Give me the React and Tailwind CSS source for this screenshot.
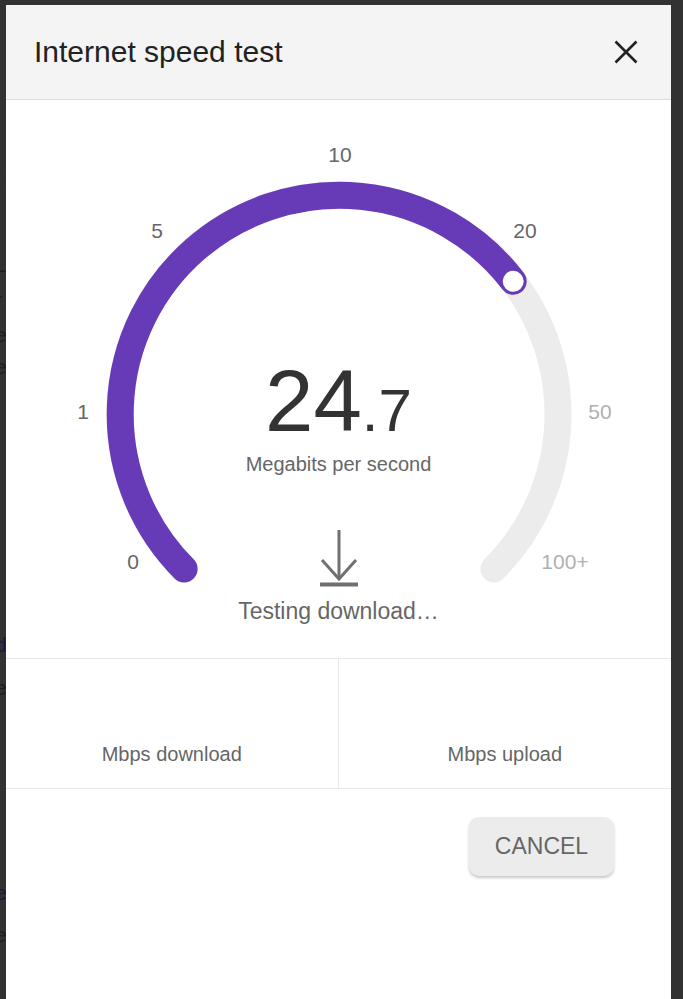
import React from "react";

const PURPLE = "#673ab7";

// fragments of the page behind the dialog, cut off at the left edge
const fragments = [
  { ch: "t", mt: "mt-[168px]", color: "text-[#2a2118]" },
  { ch: "L", mt: "mt-[67px]", color: "text-[#1c1c1c]" },
  { ch: "r", mt: "mt-[15px]", color: "text-[#161a40]" },
  { ch: "e", mt: "mt-[15px]", color: "text-[#1e1e1e]" },
  { ch: "e", mt: "mt-[12px]", color: "text-[#1e1e1e]" },
  { ch: "d", mt: "mt-[258px]", color: "text-[#16164a]" },
  { ch: "e", mt: "mt-[23px]", color: "text-[#1e1e1e]" },
  { ch: "e", mt: "mt-[185px]", color: "text-[#16164a]" },
  { ch: "e", mt: "mt-[22px]", color: "text-[#1e1e1e]" },
];

const labels = [
  { text: "0", pos: "left-[127px] top-[461px]", color: "text-[#666]" },
  { text: "1", pos: "left-[77px] top-[311px]", color: "text-[#666]" },
  { text: "5", pos: "left-[151px] top-[130px]", color: "text-[#666]" },
  { text: "10", pos: "left-[334px] top-[54px]", color: "text-[#666]" },
  { text: "20", pos: "left-[519px] top-[130px]", color: "text-[#666]" },
  { text: "50", pos: "left-[594px] top-[311px]", color: "text-[#b0b0b0]" },
  { text: "100+", pos: "left-[559px] top-[461px]", color: "text-[#b0b0b0]" },
];

const Gauge = () => (
  <svg className="absolute inset-0" width="665" height="558" viewBox="0 0 665 558">
    <path
      d="M 178.1 468.9 A 219 219 0 1 1 487.9 468.9"
      fill="none"
      stroke="#ececec"
      strokeWidth="27"
      strokeLinecap="round"
    />
    <path
      d="M 178.1 468.9 A 219 219 0 1 1 507.2 181.3"
      fill="none"
      stroke={PURPLE}
      strokeWidth="27"
      strokeLinecap="round"
    />
    <circle cx="507.2" cy="181.3" r="11.5" fill="#fff" stroke={PURPLE} strokeWidth="2" />
  </svg>
);

const DownloadIcon = () => (
  <svg width="40" height="58" viewBox="0 0 40 58" fill="none" stroke="#707070" strokeWidth="3">
    <path d="M20 1 V50" />
    <path d="M3 31 L20 50 L37 31" />
    <path d="M1 55.5 H39" strokeWidth="4" />
  </svg>
);

export default function App() {
  return (
    <div className="flex h-[999px] w-[683px] overflow-hidden bg-[#323232] font-['Liberation_Sans',Arial,sans-serif]">
      <div className="flex w-[6px] shrink-0 flex-col overflow-hidden">
        {fragments.map((f, i) => (
          <span key={i} className={`${f.mt} ${f.color} -ml-[5px] block text-[21px] leading-[20px]`}>
            {f.ch}
          </span>
        ))}
      </div>

      <div className="mt-[5px] flex w-[665px] shrink-0 flex-col bg-white">
        <div className="flex h-[95px] items-center justify-between border-b border-[#dcdcdc] bg-[#f4f4f4] pl-[28px] pr-[32px]">
          <h1 className="text-[30px] leading-none text-[#222]">Internet speed test</h1>
          <button type="button" className="flex h-[26px] w-[26px] items-center justify-center">
            <svg width="24" height="24" viewBox="0 0 24 24" stroke="#222" strokeWidth="2.6" fill="none">
              <path d="M1.5 1.5 L22.5 22.5 M22.5 1.5 L1.5 22.5" />
            </svg>
          </button>
        </div>

        <div className="relative flex h-[558px] flex-col items-center pt-[257px]">
          <Gauge />
          {labels.map((l) => (
            <span
              key={l.text}
              className={`absolute ${l.pos} ${l.color} -translate-x-1/2 -translate-y-1/2 text-[21px] leading-none`}
            >
              {l.text}
            </span>
          ))}
          <div className="relative flex items-baseline text-[#333]">
            <span className="text-[87px] leading-none">24</span>
            <span className="text-[60px] leading-none">.7</span>
          </div>
          <p className="relative mt-[10px] text-[20px] leading-none text-[#666]">Megabits per second</p>
          <div className="relative mt-[55px]">
            <DownloadIcon />
          </div>
          <p className="relative mt-[13px] text-[23px] leading-none text-[#666]">Testing download…</p>
        </div>

        <div className="grid h-[131px] grid-cols-2 border-y border-[#e8e8e8]">
          <div className="flex items-end justify-center border-r border-[#e8e8e8] pb-[24px]">
            <span className="text-[20px] leading-none text-[#666]">Mbps download</span>
          </div>
          <div className="flex items-end justify-center pb-[24px]">
            <span className="text-[20px] leading-none text-[#666]">Mbps upload</span>
          </div>
        </div>

        <div className="flex justify-end pr-[57px] pt-[28px]">
          <button
            type="button"
            className="h-[59px] w-[145px] rounded-[10px] bg-[#ececec] text-[23px] leading-none text-[#666] shadow-[0_2px_3px_rgba(0,0,0,0.22)]"
          >
            CANCEL
          </button>
        </div>
      </div>

      <div className="flex-1" />
    </div>
  );
}
